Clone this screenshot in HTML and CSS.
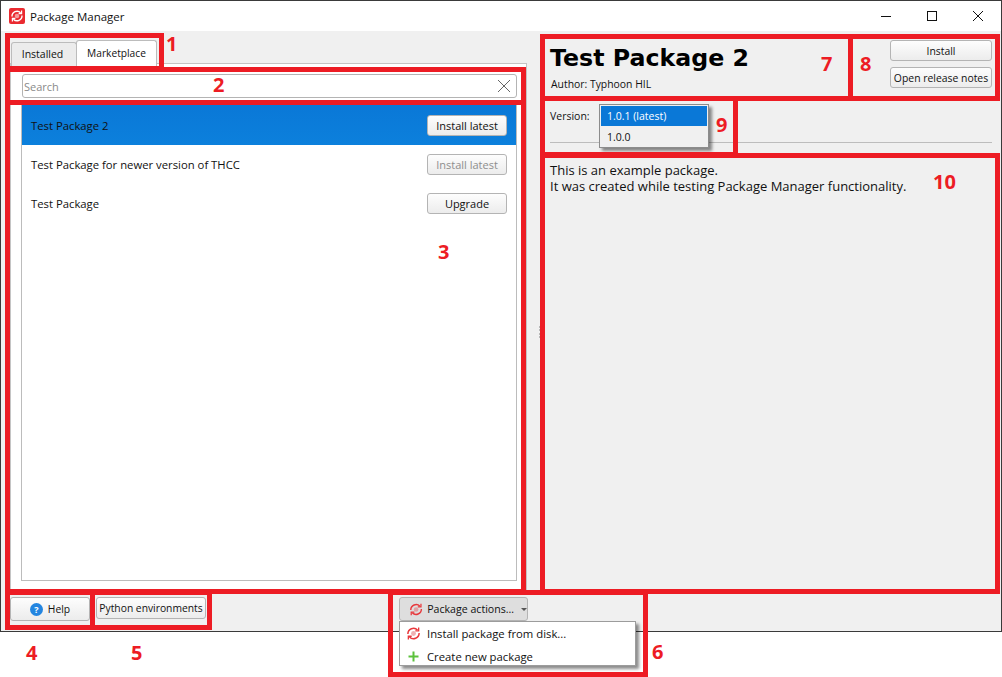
FILE: index.html
```html
<!DOCTYPE html>
<html lang="en">
<head>
<meta charset="utf-8">
<title>Package Manager</title>
<link rel="stylesheet" href="styles.css">
</head>
<body>
<div class="window">
  <header class="titlebar">
    <svg class="app-icon" width="16" height="16" viewBox="0 0 16 16"><rect width="16" height="16" rx="2" fill="#ea2a30"/><path d="M3 8.5a5 5 0 0 1 8.6-3.7M13 7.5a5 5 0 0 1-8.6 3.7" fill="none" stroke="#fff" stroke-width="1.4"/><path d="M12.6 2.6v3H9.6M3.4 13.4v-3h3" fill="none" stroke="#fff" stroke-width="1.2"/><circle cx="8" cy="8" r="2.3" fill="#f59a9c"/></svg>
    <span class="title-text">Package Manager</span>
    <div class="win-controls">
      <svg class="win-btn" width="46" height="30" viewBox="0 0 46 30"><path d="M18 15.5h10" stroke="#111" fill="none"/></svg>
      <svg class="win-btn" width="46" height="30" viewBox="0 0 46 30"><rect x="18.5" y="10.5" width="9" height="9" stroke="#111" fill="none"/></svg>
      <svg class="win-btn" width="46" height="30" viewBox="0 0 46 30"><path d="M18 10l10 10M28 10L18 20" stroke="#111" fill="none"/></svg>
    </div>
  </header>
  <div class="main">
    <section class="left">
      <div class="tabs">
        <div class="tab">Installed</div>
        <div class="tab active">Marketplace</div>
      </div>
      <div class="pane">
        <div class="search">
          <span class="placeholder">Search</span>
          <svg width="14" height="14" viewBox="0 0 14 14"><path d="M1 1l12 12M13 1L1 13" stroke="#666" fill="none"/></svg>
        </div>
        <div class="list">
          <div class="row selected"><span>Test Package 2</span><button class="btn row-btn">Install latest</button></div>
          <div class="row"><span>Test Package for newer version of THCC</span><button class="btn row-btn disabled">Install latest</button></div>
          <div class="row"><span>Test Package</span><button class="btn row-btn">Upgrade</button></div>
        </div>
      </div>
    </section>
    <div class="splitter"></div>
    <section class="right">
      <div class="head">
        <div class="head-info">
          <h1 class="pkg-title">Test Package 2</h1>
          <div class="author">Author: Typhoon HIL</div>
        </div>
        <div class="head-actions">
          <button class="btn action">Install</button>
          <button class="btn action">Open release notes</button>
        </div>
      </div>
      <div class="version-row">
        <span class="version-label">Version:</span>
        <div class="version-menu">
          <div class="version-item current">1.0.1 (latest)</div>
          <div class="version-item">1.0.0</div>
        </div>
      </div>
      <div class="description">This is an example package.<br>It was created while testing Package Manager functionality.</div>
    </section>
  </div>
  <footer class="bottom">
    <button class="btn help"><svg width="13" height="13" viewBox="0 0 13 13"><circle cx="6.5" cy="6.5" r="6.5" fill="#2385e0"/><text x="6.5" y="9.7" class="help-mark" text-anchor="middle">?</text></svg>Help</button>
    <button class="btn python">Python environments</button>
    <div class="actions-wrap">
      <button class="btn pkg-actions">
        <svg width="15" height="15" viewBox="0 0 16 16"><path d="M2 8.5a6 6 0 0 1 10.3-4.2M14 7.5a6 6 0 0 1-10.3 4.2" fill="none" stroke="#e8383c" stroke-width="1.6"/><path d="M13.5 1.5v3.6H9.9M2.5 14.5v-3.6h3.6" fill="none" stroke="#e8383c" stroke-width="1.4"/><circle cx="8" cy="8" r="2.6" fill="#e0a0a2"/></svg>
        <span class="nowrap">Package actions…</span><span class="caret"></span>
      </button>
      <div class="pkg-menu">
        <div class="pkg-item"><svg width="15" height="15" viewBox="0 0 16 16"><path d="M2 8.5a6 6 0 0 1 10.3-4.2M14 7.5a6 6 0 0 1-10.3 4.2" fill="none" stroke="#e8383c" stroke-width="1.6"/><path d="M13.5 1.5v3.6H9.9M2.5 14.5v-3.6h3.6" fill="none" stroke="#e8383c" stroke-width="1.4"/><circle cx="8" cy="8" r="2.6" fill="#eeb0b2"/></svg><span>Install package from disk...</span></div>
        <div class="pkg-item"><svg width="15" height="15" viewBox="0 0 15 15"><path d="M7.5 2.5v10M2.5 7.5h10" stroke="#5cc23c" stroke-width="2" fill="none"/></svg><span>Create new package</span></div>
      </div>
    </div>
  </footer>
</div>

<div class="mark m1"></div><div class="mark m2"></div><div class="mark m3"></div><div class="mark m4"></div><div class="mark m5"></div>
<div class="mark m6"></div><div class="mark m7"></div><div class="mark m8"></div><div class="mark m9"></div><div class="mark m10"></div>
<span class="num n1">1</span><span class="num n2">2</span><span class="num n3">3</span><span class="num n4">4</span><span class="num n5">5</span>
<span class="num n6">6</span><span class="num n7">7</span><span class="num n8">8</span><span class="num n9">9</span><span class="num n10">10</span>
</body>
</html>
```
FILE: styles.css
```css
* { box-sizing: border-box; }
html, body { margin: 0; padding: 0; background: #fff; }
body { width: 1002px; height: 677px; position: relative; overflow: hidden; font-family: "Open Sans", sans-serif; font-size: 11px; color: #111; }

.window { width: 1002px; height: 632px; border: 1px solid #3a3a3a; display: flex; flex-direction: column; background: #f0f0f0; }

.titlebar { height: 30px; background: #fff; display: flex; align-items: center; padding-left: 8px; flex: none; }
.app-icon { flex: none; }
.title-text { margin-left: 5px; font-size: 11.5px; }
.win-controls { margin-left: auto; display: flex; }
.win-btn { display: block; }
.nowrap { white-space: nowrap; }

.main { flex: 1; display: flex; min-height: 0; }
.left { width: 536px; flex: none; padding: 8px 0 0 9px; display: flex; flex-direction: column; }
.tabs { display: flex; height: 27px; padding-left: 1px; align-items: flex-end; position: relative; z-index: 1; }
.tab { height: 24px; width: 66px; padding-right: 3px; background: #ececec; border: 1px solid #bcbcbc; border-bottom: 0; border-radius: 3px 3px 0 0; text-align: center; line-height: 23px; font-size: 10.5px; }
.tab.active { height: 26px; width: 81px; padding-right: 0; margin-left: -1px; background: #fff; line-height: 25px; font-size: 10.2px; }
.pane { flex: 1; width: 517px; margin-top: -3px; background: #fff; border: 1px solid #c4c4c4; border-bottom: 0; padding: 10px 9px 9px 11px; display: flex; flex-direction: column; }
.search { height: 24px; width: 495px; flex: none; border: 1px solid #b4b4b4; border-radius: 3px; padding: 0 5px 0 1px; display: flex; align-items: center; justify-content: space-between; }
.placeholder { color: #8a8a8a; font-size: 11px; }
.list { margin-top: 7px; flex: 1; width: 496px; margin-left: -1px; border: 1px solid #bcbcbc; border-top: 0; font-size: 11.3px; }
.row { height: 39px; padding: 0 9px; display: flex; align-items: center; justify-content: space-between; }
.row.selected { height: 40px; background: linear-gradient(#0a78d7, #0c80dc); }
.btn { font: inherit; font-size: 11px; color: #111; background: linear-gradient(#fdfdfd, #ececec); border: 1px solid #b4b4b4; border-radius: 3px; padding: 0; white-space: nowrap; }
.row-btn { width: 80px; height: 21px; }
.disabled { color: #8e8e8e; }

.splitter { width: 2px; margin: 295px 0 0 2px; height: 12px; border-left: 2px dotted #b8b8b8; }
.right { flex: 1; display: flex; flex-direction: column; padding: 0 9px 0 3px; min-width: 0; }
.head { height: 72px; flex: none; display: flex; justify-content: space-between; padding-left: 6px; }
.pkg-title { margin: 12px 0 0; font: bold 23.7px/30px "DejaVu Sans", sans-serif; color: #000; }
.author { margin-top: 4px; padding-left: 1px; font-size: 10.4px; }
.head-actions { display: flex; flex-direction: column; gap: 6px; padding-top: 9px; }
.action { width: 102px; height: 21px; font-size: 10.4px; }
.version-row { height: 40px; flex: none; margin-left: 6px; border-bottom: 1px solid #bdbdbd; position: relative; display: flex; align-items: flex-start; padding-top: 6px; }
.version-label { font-size: 10.5px; }
.version-menu { position: absolute; left: 49px; top: 1px; width: 110px; height: 44px; padding: 1px; background: #f0f0f0; border: 1px solid #8c8c8c; box-shadow: 3px 3px 3px rgba(0,0,0,.45); z-index: 2; }
.version-item { height: 21px; line-height: 22px; padding-left: 6px; font-size: 10.5px; }
.version-item.current { height: 20px; line-height: 20px; background: #0a78d7; color: #fff; }
.description { margin: 19px 0 0 6px; font-size: 13px; line-height: 16px; color: #111; }

.bottom { height: 41px; flex: none; padding-left: 9px; display: flex; align-items: flex-start; padding-top: 7px; position: relative; font-size: 10.3px; }
.bottom .btn { font-size: 10.3px; }
.help { width: 80px; height: 24px; display: flex; align-items: center; justify-content: center; gap: 5px; }
.help-mark { font: bold 9px "Open Sans", sans-serif; fill: #fff; }
.python { width: 110px; height: 22px; margin-left: 6px; }
.actions-wrap { position: absolute; left: 398px; top: 7px; }
.bottom .pkg-actions { width: 129px; height: 24px; background: #dedede; display: flex; align-items: center; padding-left: 9px; gap: 4px; font-size: 10.6px; }
.caret { width: 0; height: 0; border: 3px solid transparent; border-top: 3px solid #555; border-bottom: 0; margin-left: 3px; }
.pkg-menu { position: absolute; top: 24px; left: 0; width: 237px; height: 45px; background: #fff; border: 1px solid #9c9c9c; box-shadow: 3px 3px 3px rgba(0,0,0,.45); z-index: 3; font-size: 11.3px; }
.pkg-item { height: 22px; display: flex; align-items: center; padding-left: 6px; gap: 6px; }
.pkg-item + .pkg-item { margin-top: 1px; }

.mark { position: absolute; border: 5px solid #ed1c24; z-index: 5; pointer-events: none; }
.m1 { left: 5px; top: 33px; width: 159px; height: 38px; }
.m2 { left: 5px; top: 67px; width: 521px; height: 38px; }
.m3 { left: 5px; top: 100px; width: 521px; height: 494px; }
.m4 { left: 5px; top: 590px; width: 90px; height: 40px; }
.m5 { left: 90px; top: 590px; width: 122px; height: 40px; }
.m6 { left: 388px; top: 590px; width: 260px; height: 87px; }
.m7 { left: 540px; top: 34px; width: 313px; height: 67px; }
.m8 { left: 848px; top: 34px; width: 152px; height: 67px; }
.m9 { left: 540px; top: 96px; width: 198px; height: 61px; }
.m10 { left: 540px; top: 153px; width: 460px; height: 441px; }

.num { position: absolute; z-index: 6; color: #ed1c24; font: bold 20px/24px "Open Sans", sans-serif; }
.n1 { left: 166px; top: 32px; }
.n2 { left: 213px; top: 73px; }
.n3 { left: 438px; top: 240px; }
.n4 { left: 26px; top: 641px; }
.n5 { left: 131px; top: 641px; }
.n6 { left: 652px; top: 640px; }
.n7 { left: 821px; top: 52px; }
.n8 { left: 860px; top: 52px; }
.n9 { left: 716px; top: 113px; }
.n10 { left: 933px; top: 170px; }
```
